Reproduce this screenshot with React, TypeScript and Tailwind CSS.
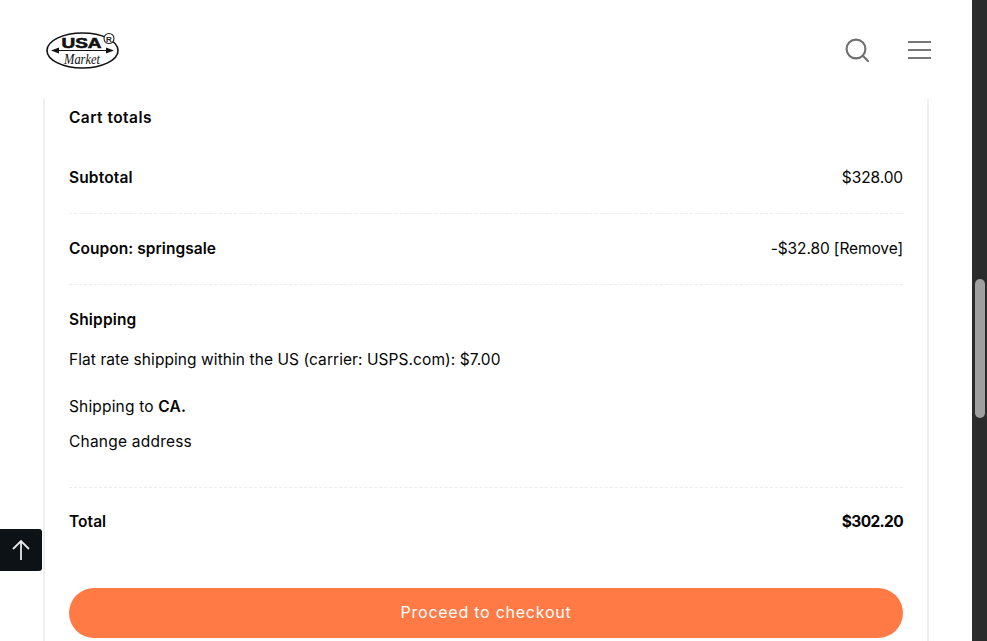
import React from "react";

function Logo() {
  return (
    <svg width="74" height="42" viewBox="0 0 74 42" className="block">
      <ellipse cx="36.5" cy="21.5" rx="35.5" ry="17.5" fill="#fff" stroke="#111" strokeWidth="1.6" />
      <text x="35.5" y="18.5" textAnchor="middle" fontFamily="'Liberation Sans', sans-serif" fontWeight="700" fontSize="14" textLength="40" lengthAdjust="spacingAndGlyphs" stroke="#111" strokeWidth="0.6" fill="#111">USA</text>
      <path d="M7 21.5H66" stroke="#111" strokeWidth="1.2" />
      <path d="M5 21.5L13 18.5V24.5Z M68 21.5L60 18.5V24.5Z" fill="#111" />
      <text x="36" y="34.5" textAnchor="middle" fontFamily="'Liberation Serif', serif" fontStyle="italic" fontSize="14" textLength="36" lengthAdjust="spacingAndGlyphs" fill="#111">Market</text>
      <circle cx="63" cy="9.5" r="5" fill="#fff" stroke="#222" strokeWidth="1.1" />
      <text x="63" y="12.5" textAnchor="middle" fontFamily="'Liberation Sans', sans-serif" fontWeight="700" fontSize="8" fill="#222">R</text>
    </svg>
  );
}

function Row({ left, right, className = "" }: { left: React.ReactNode; right?: React.ReactNode; className?: string }) {
  return (
    <div className={`flex items-center justify-between border-b border-dashed border-[#ececec] ${className}`}>
      {left}
      {right}
    </div>
  );
}

export default function App() {
  return (
    <div className="relative flex h-[641px] overflow-hidden bg-white font-['Inter','Liberation_Sans',sans-serif] text-[15.5px] text-[#050505]">
      <div className="flex min-w-0 flex-1 flex-col">
        <header className="z-10 flex h-[99px] shrink-0 items-center justify-between bg-white pl-[46px] pr-[41px]">
          <Logo />
          <div className="flex items-center gap-[39px]">
            <svg width="24" height="24" viewBox="0 0 24 24" fill="none" stroke="#6f6f6f" strokeWidth="2.1">
              <circle cx="11" cy="11" r="9.4" />
              <path d="M18 18L23 23" strokeLinecap="round" />
            </svg>
            <div className="flex w-[23px] flex-col gap-[6px]">
              <div className="h-[2px] bg-[#777]" />
              <div className="h-[2px] bg-[#777]" />
              <div className="h-[2px] bg-[#777]" />
            </div>
          </div>
        </header>
        <main className="ml-[43px] mr-[43px] flex-1 border-x-2 border-[#efefef] px-[24px]">
          <div className="flex h-[38px] items-center font-semibold tracking-[0.45px]">Cart totals</div>
          <Row
            className="h-[77px] pt-[6px]"
            left={<span className="font-semibold tracking-[0.15px]">Subtotal</span>}
            right={<span className="tracking-[-0.1px]">$328.00</span>}
          />
          <Row
            className="h-[71px]"
            left={<span className="font-semibold tracking-[0.05px]">Coupon: springsale</span>}
            right={<span className="tracking-[-0.1px]">-$32.80 [Remove]</span>}
          />
          <div className="h-[203px] border-b border-dashed border-[#ececec] pt-[25px]">
            <div className="font-semibold leading-[20px] tracking-[0.15px]">Shipping</div>
            <div className="mt-[20px] leading-[20px] tracking-[0.07px]">Flat rate shipping within the US (carrier: USPS.com): $7.00</div>
            <div className="mt-[27px] leading-[20px] tracking-[0.17px]">
              Shipping to <b className="font-semibold">CA.</b>
            </div>
            <div className="mt-[15px] leading-[20px] tracking-[0.22px]">Change address</div>
          </div>
          <div className="flex h-[68px] items-center justify-between font-semibold">
            <span className="tracking-[0.05px]">Total</span>
            <span className="font-bold tracking-[-0.65px]">$302.20</span>
          </div>
          <button className="mt-[32px] flex h-[50px] w-full items-center justify-center rounded-full bg-[#ff7a45] pb-[3px] text-[16px] tracking-[0.75px] text-white">
            Proceed to checkout
          </button>
        </main>
      </div>
      <aside className="w-[15px] shrink-0 bg-[#2b2b2b] pl-[3px] pr-[2px] pt-[279px]">
        <div className="h-[139px] rounded-full bg-[#9f9f9f]" />
      </aside>
      <button className="absolute left-0 top-[529px] flex h-[42px] w-[42px] items-center justify-center rounded-r-[3px] bg-[#0d1217]" aria-label="Back to top">
        <svg width="20" height="22" viewBox="0 0 20 22" fill="none" stroke="#e8e8e8" strokeWidth="1.8">
          <path d="M10 21V2M2 10L10 2L18 10" />
        </svg>
      </button>
    </div>
  );
}
